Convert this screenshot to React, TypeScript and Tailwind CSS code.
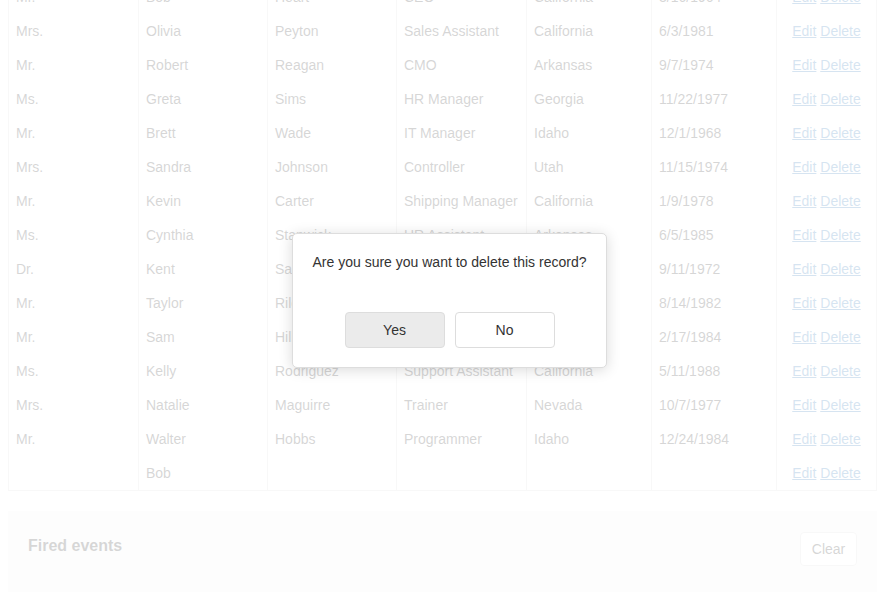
import React from "react";

const rows: string[][] = [
  ["Mr.", "Bob", "Heart", "CEO", "California", "3/16/1964"],
  ["Mrs.", "Olivia", "Peyton", "Sales Assistant", "California", "6/3/1981"],
  ["Mr.", "Robert", "Reagan", "CMO", "Arkansas", "9/7/1974"],
  ["Ms.", "Greta", "Sims", "HR Manager", "Georgia", "11/22/1977"],
  ["Mr.", "Brett", "Wade", "IT Manager", "Idaho", "12/1/1968"],
  ["Mrs.", "Sandra", "Johnson", "Controller", "Utah", "11/15/1974"],
  ["Mr.", "Kevin", "Carter", "Shipping Manager", "California", "1/9/1978"],
  ["Ms.", "Cynthia", "Stanwick", "HR Assistant", "Arkansas", "6/5/1985"],
  ["Dr.", "Kent", "Samuelson", "Ombudsman", "Missouri", "9/11/1972"],
  ["Mr.", "Taylor", "Riley", "Network Admin", "California", "8/14/1982"],
  ["Mr.", "Sam", "Hill", "Sales Assistant", "Colorado", "2/17/1984"],
  ["Ms.", "Kelly", "Rodriguez", "Support Assistant", "California", "5/11/1988"],
  ["Mrs.", "Natalie", "Maguirre", "Trainer", "Nevada", "10/7/1977"],
  ["Mr.", "Walter", "Hobbs", "Programmer", "Idaho", "12/24/1984"],
  ["", "Bob", "", "", "", ""],
];

export default function App() {
  return (
    <div
      className="relative w-[885px] h-[600px] overflow-hidden bg-white text-[14px] text-[#333]"
      style={{ fontFamily: '"Liberation Sans", Arial, Helvetica, sans-serif' }}
    >
      <div className="px-2">
        <div className="mt-[-20px] border-x border-b border-[#ddd]">
          {rows.map((r, i) => (
            <div
              key={i}
              className="grid grid-cols-[130px_129px_129px_130px_125px_125px_1fr] h-[34px] leading-[20px]"
            >
              {r.map((c, j) => (
                <div key={j} className="border-r border-[#ddd] px-[7px] py-[7px] whitespace-nowrap overflow-hidden">
                  {c}
                </div>
              ))}
              <div className="px-[7px] py-[7px] text-center whitespace-nowrap">
                <a className="text-[#337ab7] underline cursor-pointer">Edit</a>{" "}
                <a className="text-[#337ab7] underline cursor-pointer">Delete</a>
              </div>
            </div>
          ))}
        </div>

        <div className="mt-5 h-[81px] bg-[#f6f6f6] px-5 pt-5 flex justify-between items-start">
          <div className="text-[16px] font-bold leading-[30px]">Fired events</div>
          <button className="mt-px h-[34px] w-[57px] rounded-[4px] border border-[#ddd] bg-white text-[14px] text-[#333]">
            Clear
          </button>
        </div>
      </div>

      <div className="absolute inset-0 bg-white/80" />

      <div className="absolute left-[292px] top-[233px] w-[315px] h-[135px] rounded-[5px] border border-[#ddd] bg-white shadow-[0_2px_14px_rgba(0,0,0,0.15)] flex flex-col items-center">
        <div className="pt-[18px] leading-[20px] text-[14px] text-[#333]">
          Are you sure you want to delete this record?
        </div>
        <div className="mt-[40px] flex gap-[10px]">
          <button className="h-[36px] w-[100px] rounded-[4px] border border-[#ddd] bg-[#ebebeb] text-[14px] text-[#333]">
            Yes
          </button>
          <button className="h-[36px] w-[100px] rounded-[4px] border border-[#ddd] bg-white text-[14px] text-[#333]">
            No
          </button>
        </div>
      </div>
    </div>
  );
}
